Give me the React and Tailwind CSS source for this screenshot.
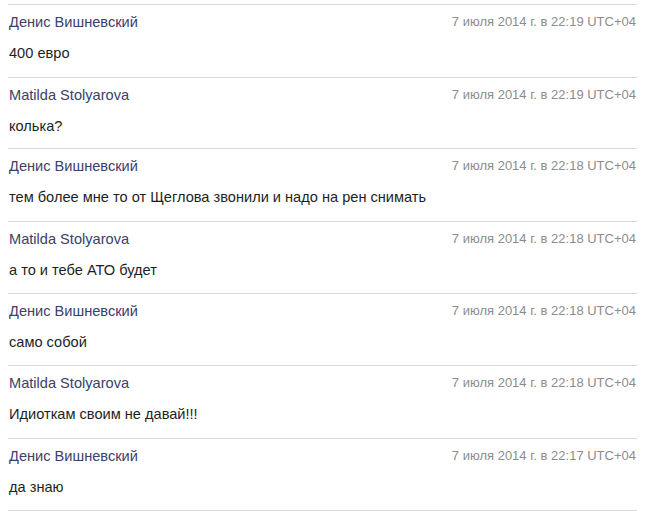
const messages = [
  { name: 'Денис Вишневский', time: '7 июля 2014 г. в 22:19 UTC+04', text: '400 евро', pb: 'pb-[16px]' },
  { name: 'Matilda Stolyarova', time: '7 июля 2014 г. в 22:19 UTC+04', text: 'колька?', pb: 'pb-[14px]' },
  { name: 'Денис Вишневский', time: '7 июля 2014 г. в 22:18 UTC+04', text: 'тем более мне то от Щеглова звонили и надо на рен снимать', pb: 'pb-[16px]' },
  { name: 'Matilda Stolyarova', time: '7 июля 2014 г. в 22:18 UTC+04', text: 'а то и тебе АТО будет', pb: 'pb-[15px]' },
  { name: 'Денис Вишневский', time: '7 июля 2014 г. в 22:18 UTC+04', text: 'само собой', pb: 'pb-[15px]' },
  { name: 'Matilda Stolyarova', time: '7 июля 2014 г. в 22:18 UTC+04', text: 'Идиоткам своим не давай!!!', pb: 'pb-[16px]' },
  { name: 'Денис Вишневский', time: '7 июля 2014 г. в 22:17 UTC+04', text: 'да знаю', pb: 'pb-[15px]' },
];

export default function App() {
  return (
    <div className="w-[647px] h-[511px] bg-white overflow-hidden pt-[4px] font-['Liberation_Sans',Arial,sans-serif] text-[14.6px]">
      <div className="ml-[8px] w-[629px] border-b border-[#d9d9d9]">
        {messages.map((m, i) => (
          <div key={i} className={`border-t border-[#d9d9d9] pt-[9px] ${m.pb}`}>
            <div className="flex items-center justify-between h-[16px] leading-[16px] pl-[1px]">
              <span className="text-[#3c406a]">{m.name}</span>
              <span className="text-[#8c8c8c] text-[13px] pr-[1px]">{m.time}</span>
            </div>
            <div className="mt-[15px] h-[16px] leading-[16px] pl-[1px] text-[#1e1e1e]">{m.text}</div>
          </div>
        ))}
      </div>
    </div>
  );
}
